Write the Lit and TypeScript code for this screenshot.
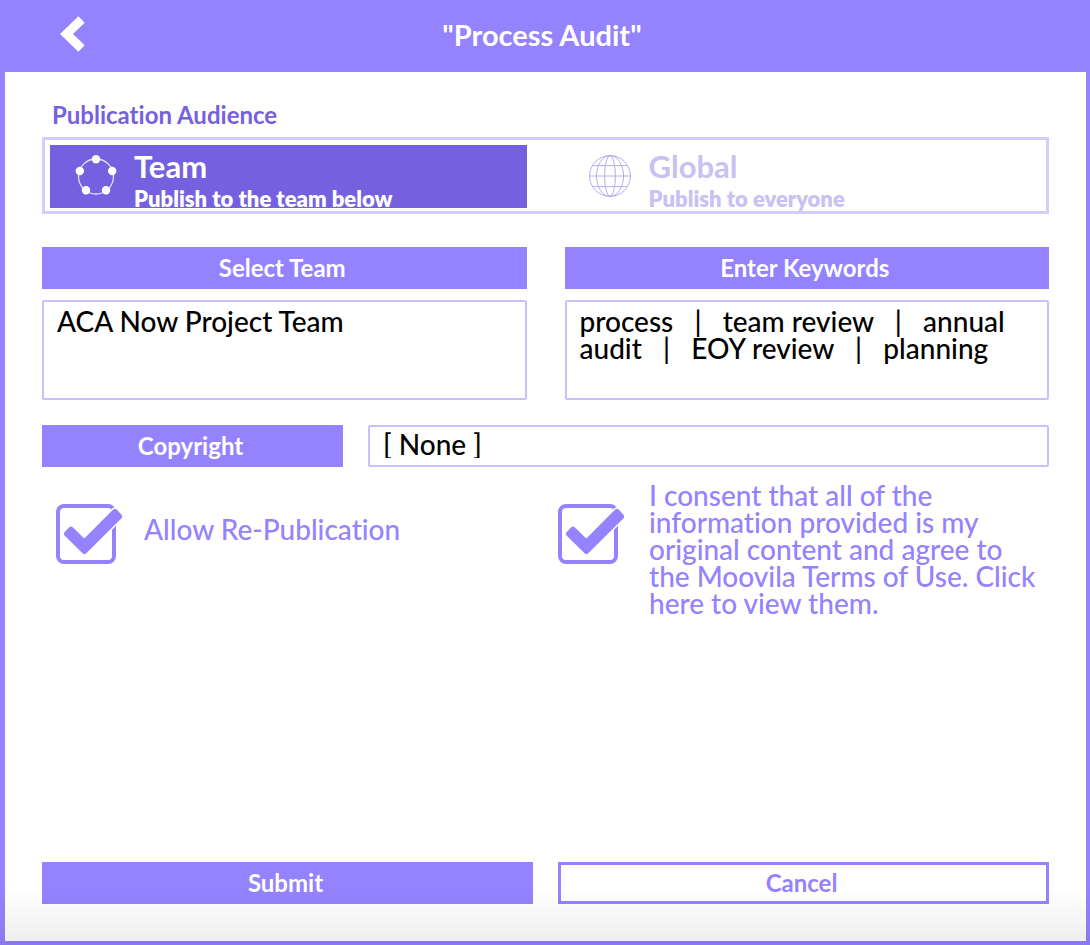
import { LitElement, html, css, svg } from "lit";
import { customElement, state } from "lit/decorators.js";

type Audience = "team" | "global";

const teamIcon = svg`
  <circle cx="21" cy="21.5" r="17.5" fill="none" stroke="currentColor" stroke-opacity="0.8" stroke-width="1.3" />
  <g fill="currentColor">
    <circle cx="21" cy="4.2" r="4.2" />
    <circle cx="37.2" cy="16" r="4.2" />
    <circle cx="31" cy="35.2" r="4.2" />
    <circle cx="11" cy="35.2" r="4.2" />
    <circle cx="4.8" cy="16" r="4.2" />
  </g>`;

const globeIcon = svg`
  <g fill="none" stroke="currentColor" stroke-width="0.9">
    <circle cx="21" cy="21" r="20.4" />
    <ellipse cx="21" cy="21" rx="13.5" ry="20.4" />
    <ellipse cx="21" cy="21" rx="5.4" ry="20.4" />
    <path d="M0.6 21H41.4M4 10.6H38M4 31.6H38" />
  </g>`;

@customElement("check-field")
export class CheckField extends LitElement {
  static properties = { checked: { type: Boolean } };
  declare checked: boolean;

  static styles = css`
    :host {
      display: block;
    }
    .field {
      display: grid;
      grid-template-columns: 66px 1fr;
      column-gap: var(--check-gap, 22px);
      cursor: pointer;
    }
    .mark {
      display: grid;
      margin-top: 22px;
      align-self: start;
    }
    .mark > * {
      grid-area: 1 / 1;
      width: 66px;
      height: 62px;
      margin: 0;
    }
    .box {
      appearance: none;
      border-radius: 8px;
      cursor: pointer;
    }
    .box:focus-visible {
      outline: 2px solid #7561df;
      outline-offset: 2px;
    }
    .art {
      pointer-events: none;
      overflow: visible;
    }
  `;

  constructor() {
    super();
    this.checked = true;
  }

  private toggle(e: Event) {
    this.checked = (e.target as HTMLInputElement).checked;
  }

  render() {
    return html`
      <label class="field">
        <span class="mark">
          <input class="box" type="checkbox" .checked=${this.checked} @change=${this.toggle} />
          <svg class="art" viewBox="0 0 66 62" aria-hidden="true">
            <rect x="2" y="2" width="56" height="56" rx="6" fill="none" stroke="#9482ff" stroke-width="4" />
            ${this.checked
              ? svg`<path
                  d="M26.800 49.500L8.500 31.500Q7 30 8.500 28.300L13.200 23.300Q15 21.800 16.700 23.300L28.300 34.500L57.200 5.500Q59 4 60.700 5.500L65.500 10.800Q67 12.500 65.500 14.200L30 49.500Q28.400 51 26.800 49.500Z"
                  fill="#9482ff" stroke="#fff" stroke-width="3" paint-order="stroke" stroke-linejoin="round" />`
              : null}
          </svg>
        </span>
        <slot></slot>
      </label>
    `;
  }
}

@customElement("app-root")
export class AppRoot extends LitElement {
  @state() private audience: Audience = "team";

  static styles = css`
    :host {
      --violet: #9482ff;
      --deep: #7561df;
      --line: #c9c1ff;
      display: flex;
      flex-direction: column;
      position: relative;
      box-sizing: border-box;
      min-height: 100vh;
      border: solid var(--violet);
      border-width: 0 4px 4px 5px;
      background: #fff;
      color: var(--violet);
      font: 500 28px/27px Lato, "Open Sans", sans-serif;
      font-variant-ligatures: none;
    }
    :host::after {
      content: "";
      position: absolute;
      inset: auto -4px -4px -5px;
      height: 56px;
      background: linear-gradient(rgba(0, 0, 0, 0), rgba(0, 0, 0, 0.07));
      pointer-events: none;
    }
    *,
    *::before {
      box-sizing: border-box;
    }
    button,
    textarea,
    select {
      font: inherit;
      margin: 0;
    }
    header {
      display: grid;
      grid-template-columns: 1fr auto 1fr;
      align-items: center;
      height: 72px;
      padding: 0 44px 4px 37px;
      background: var(--violet);
      color: #fff;
    }
    h1 {
      margin: 0;
      font-size: 29px;
      font-weight: 700;
    }
    .back {
      display: flex;
      justify-self: start;
      margin-left: 17px;
      padding: 0;
      border: 0;
      background: none;
      color: inherit;
      cursor: pointer;
    }
    .back svg {
      width: 26px;
      height: 38px;
    }
    form {
      display: flex;
      flex: 1;
      flex-direction: column;
      padding: 29px 37px 37px;
    }
    fieldset {
      min-width: 0;
      margin: 0;
      padding: 0;
      border: 0;
    }
    legend {
      padding: 0 10px;
      color: var(--deep);
      font-size: 24px;
      font-weight: 700;
    }
    .audience {
      display: grid;
      grid-template-columns: 1fr 1fr;
      column-gap: 38px;
      height: 77px;
      margin-top: 9px;
      padding: 5px 5px 0 5px;
      border: 3px solid #d3ceff;
    }
    .tile {
      display: grid;
      grid-template-columns: 43px 1fr;
      column-gap: 16px;
      height: 63px;
      padding: 10px 0 0 25px;
      color: #c8c1f3;
      cursor: pointer;
    }
    .tile svg {
      grid-area: 1 / 1;
      width: 42px;
      height: 44px;
    }
    .tile.global {
      padding-left: 24px;
      column-gap: 17px;
    }
    .tile.global svg {
      color: #b0a5ec;
    }
    .tile.on,
    .tile.on svg {
      background: var(--deep);
      color: #fff;
      overflow: hidden;
    }
    .tile input {
      grid-area: 1 / 1;
      appearance: none;
      margin: 0;
    }
    .name {
      display: block;
      font-size: 31px;
      font-weight: 700;
      line-height: 22px;
    }
    .hint {
      display: block;
      margin-top: 10px;
      font-size: 22px;
      font-weight: 800;
      line-height: 24px;
    }
    .pair {
      display: grid;
      grid-template-columns: 1fr 1fr;
      column-gap: 38px;
      margin-top: 33px;
    }
    .bar {
      display: flex;
      align-items: center;
      justify-content: center;
      height: 42px;
      padding: 0 4px 2px 0;
      border: 0;
      background: var(--violet);
      color: #fff;
      font-size: 24px;
      font-weight: 700;
    }
    .entry {
      display: block;
      width: 100%;
      border: 2px solid var(--line);
      border-radius: 2px;
      background: #fff;
      color: #000;
      outline-color: var(--deep);
    }
    textarea.entry {
      height: 100px;
      margin-top: 11px;
      padding: 6px 13px;
      resize: none;
      overflow: hidden;
    }
    .copyright {
      display: grid;
      grid-template-columns: 301fr 681fr;
      column-gap: 25px;
      margin-top: 25px;
    }
    select.entry {
      height: 42px;
      padding: 0 13px 4px;
      appearance: none;
    }
    .checks {
      display: grid;
      grid-template-columns: 1fr 1fr;
      column-gap: 25px;
      margin-top: 15px;
    }
    .checks check-field:first-child {
      padding-left: 14px;
    }
    .checks check-field:last-child {
      --check-gap: 25px;
    }
    .allow {
      padding-top: 34px;
    }
    .actions {
      display: grid;
      grid-template-columns: 1fr 1fr;
      column-gap: 25px;
      margin-top: auto;
    }
    .actions .bar {
      cursor: pointer;
    }
    .actions .cancel {
      border: 3px solid var(--violet);
      background: #fff;
      color: var(--violet);
    }
  `;

  private tile(value: Audience, name: string, hint: string, icon: unknown) {
    const on = this.audience === value;
    return html`
      <label class="tile ${value} ${on ? "on" : ""}">
        <input type="radio" name="audience" value=${value} .checked=${on}
          @change=${() => (this.audience = value)} />
        <svg viewBox="0 0 42 44" aria-hidden="true">${icon}</svg>
        <span>
          <span class="name">${name}</span>
          <span class="hint">${hint}</span>
        </span>
      </label>
    `;
  }

  render() {
    const keywords = ["process", "team review", "annual audit", "EOY review", "planning"];
    return html`
      <header>
        <button class="back" type="button" aria-label="Back">
          <svg viewBox="0 0 26 38" aria-hidden="true">
            <path d="M22.500 4.500L7.500 19L22.500 33.500" fill="none" stroke="currentColor" stroke-width="9" />
          </svg>
        </button>
        <h1>"Process Audit"</h1>
      </header>
      <form @submit=${(e: Event) => e.preventDefault()}>
        <fieldset>
          <legend>Publication Audience</legend>
          <div class="audience">
            ${this.tile("team", "Team", "Publish to the team below", teamIcon)}
            ${this.tile("global", "Global", "Publish to everyone", globeIcon)}
          </div>
        </fieldset>
        <div class="pair">
          <div>
            <label class="bar" for="team">Select Team</label>
            <textarea class="entry" id="team" .value=${"ACA Now Project Team"}></textarea>
          </div>
          <div>
            <label class="bar" for="keywords">Enter Keywords</label>
            <textarea class="entry" id="keywords" spellcheck="false" .value=${keywords.join("   |   ")}></textarea>
          </div>
        </div>
        <div class="copyright">
          <label class="bar" for="copyright">Copyright</label>
          <select class="entry" id="copyright">
            <option>[ None ]</option>
          </select>
        </div>
        <div class="checks">
          <check-field><div class="allow">Allow Re-Publication</div></check-field>
          <check-field>
            I consent that all of the information provided is my original content and agree to
            the Moovila Terms of Use. Click here to view them.
          </check-field>
        </div>
        <div class="actions">
          <button class="bar" type="submit">Submit</button>
          <button class="bar cancel" type="button">Cancel</button>
        </div>
      </form>
    `;
  }
}
